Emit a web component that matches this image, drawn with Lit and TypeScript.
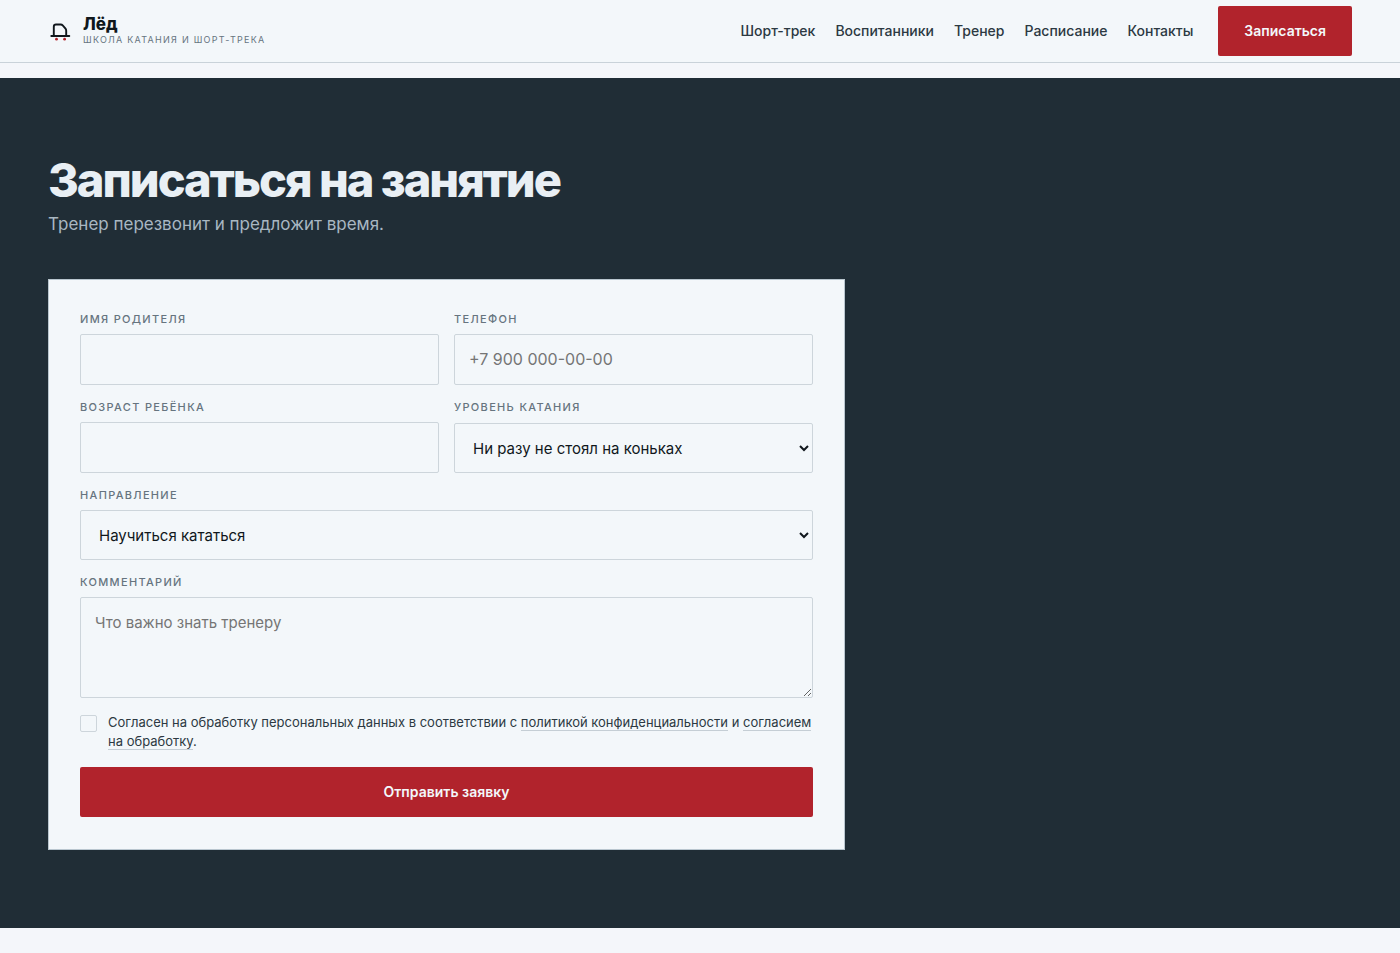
import { LitElement, html, css } from "lit";
import { customElement } from "lit/decorators.js";

const NAV = ["Шорт-трек", "Воспитанники", "Тренер", "Расписание", "Контакты"];

@customElement("app-root")
export class AppRoot extends LitElement {
  static styles = css`
    :host { display: block; min-height: 100vh; background: #f4f6fa; color: #2c3942; font-family: "Inter", "Noto Sans", sans-serif; font-size: 16px; line-height: 24px; }
    *, *::before, *::after { box-sizing: border-box; }
    .header { display: flex; flex-wrap: wrap; align-items: center; justify-content: space-between; gap: 8px 24px; padding: 6px 48px; background: #f3f7fa; border-bottom: 1px solid #c9d2d9; margin-bottom: 15px; }
    .brand { display: flex; align-items: center; gap: 11px; color: #10171c; text-decoration: none; }
    .logo { width: 24px; height: 24px; display: block; }
    .name { display: block; font-size: 17px; line-height: 18px; font-weight: 800; }
    .tagline { display: block; font-size: 9px; line-height: 14px; letter-spacing: 0.14em; text-transform: uppercase; color: #66747f; }
    .actions { display: flex; flex-wrap: wrap; align-items: center; gap: 8px 25px; }
    .nav { display: flex; flex-wrap: wrap; gap: 8px 20px; }
    .link { color: #2c3942; text-decoration: none; font-size: 14px; font-weight: 500; }
    .button { border: 0; border-radius: 2px; background: #b1232c; color: #f3f7fa; font-family: inherit; font-size: 14px; font-weight: 600; line-height: 20px; padding: 15px 26px; cursor: pointer; }
    .enroll { background: #202d36; color: #e9eff4; padding: 78px 48px; }
    .title { margin: 0; font-size: 47px; line-height: 48px; font-weight: 800; letter-spacing: -2px; }
    .lead { margin: 6px 0 41px; font-size: 17px; line-height: 28px; color: #a9b7c2; }
    .form { max-width: 797px; border: 1px solid #b9c6cf; background: #f3f7fa; padding: 32px 31px; color: #2c3942; display: grid; grid-template-columns: 1fr 1fr; gap: 15px; }
    .field { display: flex; flex-direction: column; gap: 8px; }
    .label { font-size: 11px; line-height: 14px; letter-spacing: 0.12em; font-weight: 500; text-transform: uppercase; color: #66747f; }
    .wide { grid-column: 1 / -1; }
    .control { display: block; width: 100%; margin: 0; border: 1px solid #cdd5db; border-radius: 2px; background: #f3f7fa; color: #10171c; font-family: inherit; font-size: 16px; line-height: 23px; padding: 13px 14px; }
    .select { height: 50px; margin-top: auto; font-size: 15px; }
    .area { height: 101px; resize: vertical; font-size: 15px; }
    .control::placeholder { color: #757575; }
    .consent { display: flex; align-items: flex-start; gap: 11px; padding-bottom: 1px; font-size: 13px; line-height: 19px; }
    .check { appearance: none; flex: none; width: 17px; height: 17px; margin: 2px 0 0; border: 1px solid #cdd5db; border-radius: 2px; background: #f3f7fa; }
    .check:checked { background: #b1232c; }
    .doc { color: inherit; text-decoration: none; border-bottom: 1px solid #c5ced5; }
    @media (max-width: 640px) { .form { grid-template-columns: 1fr; } }
  `;

  render() {
    return html`
      <header class="header">
        <a class="brand" href="#">
          <svg class="logo" viewBox="0 0 24 24" fill="none" aria-hidden="true">
            <path d="M3.300 17h18M5.800 17V7.700q0-2.200 2.200-2.200h4.700q1.200 0 2 .9l2.600 3q.9 1 .9 2.300V17" stroke="#10171c" stroke-width="1.900" stroke-linecap="round" stroke-linejoin="round" />
            <circle cx="8.500" cy="20.200" r="1.400" fill="#b1232c" />
            <circle cx="16.600" cy="20.200" r="1.400" fill="#b1232c" />
          </svg>
          <span><span class="name">Лёд</span><span class="tagline">Школа катания и шорт-трека</span></span>
        </a>
        <div class="actions">
          <nav class="nav">${NAV.map((item) => html`<a class="link" href="#">${item}</a>`)}</nav>
          <button class="button" type="button">Записаться</button>
        </div>
      </header>
      <main class="enroll">
        <h1 class="title">Записаться на занятие</h1>
        <p class="lead">Тренер перезвонит и предложит время.</p>
        <form class="form">
          <div class="field">
            <label class="label" for="parent">Имя родителя</label>
            <input class="control" id="parent" type="text" />
          </div>
          <div class="field">
            <label class="label" for="phone">Телефон</label>
            <input class="control" id="phone" type="tel" placeholder="+7 900 000-00-00" />
          </div>
          <div class="field">
            <label class="label" for="age">Возраст ребёнка</label>
            <input class="control" id="age" type="text" />
          </div>
          <div class="field">
            <label class="label" for="level">Уровень катания</label>
            <select class="control select" id="level"><option>Ни разу не стоял на коньках</option></select>
          </div>
          <div class="field wide">
            <label class="label" for="course">Направление</label>
            <select class="control select" id="course"><option>Научиться кататься</option></select>
          </div>
          <div class="field wide">
            <label class="label" for="comment">Комментарий</label>
            <textarea class="control area" id="comment" placeholder="Что важно знать тренеру"></textarea>
          </div>
          <div class="consent wide">
            <input class="check" id="consent" type="checkbox" />
            <label for="consent">Согласен на обработку персональных данных в соответствии с <a class="doc" href="#">политикой конфиденциальности</a> и <a class="doc" href="#">согласием на обработку</a>.</label>
          </div>
          <button class="button wide" type="button">Отправить заявку</button>
        </form>
      </main>
    `;
  }
}
